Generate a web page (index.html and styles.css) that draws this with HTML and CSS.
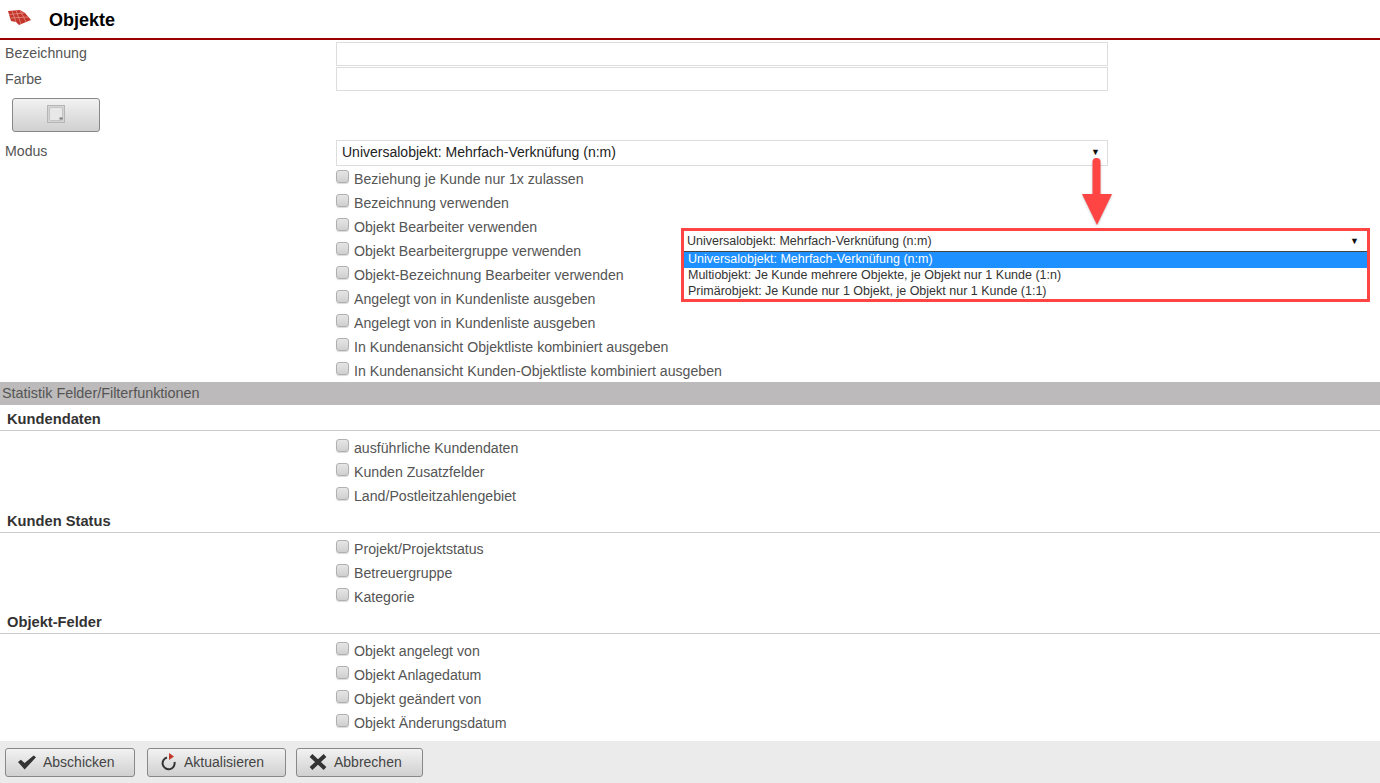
FILE: index.html
```html
<!DOCTYPE html>
<html lang="de">

<head>
    <meta charset="UTF-8" />
    <title>Objekte</title>
    <link rel="stylesheet" href="styles.css">
</head>

<body>

    <!-- Header -->
    <header class="header">
        <svg class="logo" width="24" height="16" viewBox="0 0 24 16">
            <path d="M0 1 L12 0 L17 3 L23 10 L11 15 L8 12 L3 11 Z" fill="#c4352b" />
            <path d="M4 .8 L8 12 M8 .4 L13 14 M12 0 L18 12 M1.500 4.500 L16 3 M3 8 L20 7" stroke="#e58f84" stroke-width=".8" fill="none" />
        </svg>
        <h1>Objekte</h1>
    </header>

    <!-- Main form -->
    <main class="form">
        <div class="row row-input">
            <label class="label">Bezeichnung</label>
            <div class="field"><input type="text" class="input"></div>
        </div>
        <div class="row row-input">
            <label class="label">Farbe</label>
            <div class="field"><input type="text" class="input"></div>
        </div>
        <button type="button" class="btn color-btn">
            <svg width="18" height="18" viewBox="0 0 18 18">
                <rect x=".5" y=".5" width="17" height="17" fill="#d4d4d4" stroke="#b5b5b5" />
                <rect x="2.500" y="2.500" width="13" height="13" rx="1.500" fill="#e8e8e8" stroke="#c4c4c4" />
                <rect x="12.500" y="12.500" width="3" height="2" fill="#777" />
            </svg>
        </button>
        <div class="row row-select">
            <label class="label">Modus</label>
            <div class="field">
                <div class="select">
                    <span>Universalobjekt: Mehrfach-Verknüfung (n:m)</span>
                    <span class="caret">▼</span>
                </div>
            </div>
        </div>

        <div class="checks">
            <label class="check"><input type="checkbox">Beziehung je Kunde nur 1x zulassen</label>
            <label class="check"><input type="checkbox">Bezeichnung verwenden</label>
            <label class="check"><input type="checkbox">Objekt Bearbeiter verwenden</label>
            <label class="check"><input type="checkbox">Objekt Bearbeitergruppe verwenden</label>
            <label class="check"><input type="checkbox">Objekt-Bezeichnung Bearbeiter verwenden</label>
            <label class="check"><input type="checkbox">Angelegt von in Kundenliste ausgeben</label>
            <label class="check"><input type="checkbox">Angelegt von in Kundenliste ausgeben</label>
            <label class="check"><input type="checkbox">In Kundenansicht Objektliste kombiniert ausgeben</label>
            <label class="check"><input type="checkbox">In Kundenansicht Kunden-Objektliste kombiniert ausgeben</label>
        </div>

        <div class="band">Statistik Felder/Filterfunktionen</div>

        <h2 class="group-title">Kundendaten</h2>
        <div class="checks group-checks">
            <label class="check"><input type="checkbox">ausführliche Kundendaten</label>
            <label class="check"><input type="checkbox">Kunden Zusatzfelder</label>
            <label class="check"><input type="checkbox">Land/Postleitzahlengebiet</label>
        </div>

        <h2 class="group-title">Kunden Status</h2>
        <div class="checks group-checks tight">
            <label class="check"><input type="checkbox">Projekt/Projektstatus</label>
            <label class="check"><input type="checkbox">Betreuergruppe</label>
            <label class="check"><input type="checkbox">Kategorie</label>
        </div>

        <h2 class="group-title">Objekt-Felder</h2>
        <div class="checks group-checks">
            <label class="check"><input type="checkbox">Objekt angelegt von</label>
            <label class="check"><input type="checkbox">Objekt Anlagedatum</label>
            <label class="check"><input type="checkbox">Objekt geändert von</label>
            <label class="check"><input type="checkbox">Objekt Änderungsdatum</label>
        </div>
    </main>

    <!-- Footer buttons -->
    <footer class="footer">
        <button type="button" class="btn action-btn btn-send">
            <svg width="19" height="15" viewBox="0 0 19 15">
                <path d="M0 7 L3 4.500 L7 8 L16.500 0 L19 2 L7 15 Z" fill="#333" />
            </svg>
            Abschicken
        </button>
        <button type="button" class="btn action-btn btn-refresh">
            <svg width="18" height="18" viewBox="0 0 18 18">
                <path d="M7 4.500 A6 6 0 1 0 14.500 9" fill="none" stroke="#333" stroke-width="2" />
                <path d="M9 0 L14 3.500 L9 7 Z" fill="#c0392b" />
            </svg>
            Aktualisieren
        </button>
        <button type="button" class="btn action-btn btn-cancel">
            <svg width="18" height="16" viewBox="0 0 18 16">
                <path d="M2 1.500 L16 14.500 M16 1.500 L2 14.500" stroke="#333" stroke-width="4" fill="none" />
            </svg>
            Abbrechen
        </button>
    </footer>

    <!-- Annotation over the form -->
    <svg class="arrow" width="34" height="72" viewBox="0 0 34 72">
        <path d="M16.500 6 V40" stroke="#ff4444" stroke-width="8" stroke-linecap="round" fill="none" />
        <path d="M2 38 H32 L17 69 Z" fill="#ff4444" />
    </svg>
    <div class="callout">
        <div class="callout-select">
            <span>Universalobjekt: Mehrfach-Verknüfung (n:m)</span>
            <span class="caret">▼</span>
        </div>
        <ul class="callout-list">
            <li class="selected">Universalobjekt: Mehrfach-Verknüfung (n:m)</li>
            <li>Multiobjekt: Je Kunde mehrere Objekte, je Objekt nur 1 Kunde (1:n)</li>
            <li>Primärobjekt: Je Kunde nur 1 Objekt, je Objekt nur 1 Kunde (1:1)</li>
        </ul>
    </div>

</body>

</html>
```

FILE: styles.css
```css
* {
    box-sizing: border-box;
}

html,
body {
    height: 100%;
}

body {
    margin: 0;
    height: 783px;
    display: flex;
    flex-direction: column;
    overflow: hidden;
    position: relative;
    font-family: 'Liberation Sans', Arial, sans-serif;
    font-size: 14.15px;
    color: #555;
    background: #fff;
}

/* Header */
.header {
    height: 40px;
    flex: none;
    display: flex;
    align-items: center;
    padding-left: 8px;
    border-bottom: 2px solid #9a0000;
}

.logo {
    margin-right: 17px;
    margin-top: -3px;
}

.header h1 {
    margin: 0;
    padding-top: 2px;
    font-size: 18px;
    color: #000;
}

/* Form */
.form {
    flex: 1;
    min-height: 0;
    overflow: hidden;
    padding-top: 2px;
}

.row {
    display: flex;
}

.row-input {
    height: 25px;
}

.row-input .label {
    line-height: 23px;
}

.row-input + .row-input .label {
    line-height: 25px;
}

.label {
    width: 336px;
    padding-left: 5px;
    flex: none;
}

.field {
    width: 772px;
}

.input {
    display: block;
    width: 100%;
    height: 24px;
    border: 1px solid #ddd;
    background: #fff;
}

.btn {
    font-family: inherit;
    font-size: 14px;
    color: #444;
    border: 1px solid #888;
    border-radius: 3px;
    background: linear-gradient(#f2f2f2, #d0d0d0);
    cursor: pointer;
}

.color-btn {
    display: flex;
    align-items: center;
    justify-content: center;
    width: 88px;
    height: 34px;
    margin: 6px 0 8px 12px;
    padding: 0 0 3px;
}

.row-select .label {
    line-height: 22px;
}

.select {
    display: flex;
    justify-content: space-between;
    align-items: center;
    height: 26px;
    padding: 0 7px 2px 5px;
    border: 1px solid #ddd;
    font-size: 14px;
    color: #222;
}

.caret {
    font-size: 9px;
    color: #111;
}

.checks {
    padding-left: 336px;
}

.check {
    display: flex;
    align-items: center;
    height: 24px;
    padding-top: 2px;
}

.check input {
    appearance: none;
    width: 13px;
    height: 13px;
    margin: -6px 5px 0 0;
    border: 1px solid #b0b0b0;
    border-radius: 3px;
    background: linear-gradient(#e6e6e6, #cfcfcf);
    box-shadow: 0 1px 1px rgba(0, 0, 0, 0.15);
    flex: none;
}

.band {
    height: 23px;
    padding-left: 2px;
    line-height: 23px;
    font-size: 14.4px;
    background: #bcbaba;
    color: #555;
}

.group-title {
    margin: 0;
    height: 26px;
    padding-left: 7px;
    line-height: 28px;
    font-size: 14.7px;
    color: #333;
    border-bottom: 1px solid #ccc;
}

.group-checks {
    padding-top: 4px;
}

.group-checks.tight {
    padding-top: 3px;
}

/* Footer */
.footer {
    height: 42px;
    flex: none;
    display: flex;
    align-items: center;
    padding: 0 5px;
    background: #ebebeb;
}

.action-btn {
    display: flex;
    align-items: center;
    gap: 7px;
    height: 29px;
    padding: 0 8px 0 12px;
}

.action-btn svg {
    flex: none;
    width: 18px;
}

.btn-send {
    width: 130px;
    margin-right: 12px;
}

.btn-refresh {
    width: 139px;
    margin-right: 10px;
    gap: 6px;
}

.btn-cancel {
    width: 127px;
}

/* Annotation */
.arrow {
    position: absolute;
    left: 1080px;
    top: 156px;
    filter: drop-shadow(0 1px 1px rgba(0, 0, 0, 0.25));
}

.callout {
    position: absolute;
    left: 681px;
    top: 228px;
    width: 689px;
    height: 74px;
    border: 3px solid #ff4444;
    background: #fff;
    font-size: 12.5px;
    color: #333;
}

.callout-select {
    display: flex;
    justify-content: space-between;
    align-items: center;
    height: 21px;
    padding: 0 8px 1px 3px;
    border-bottom: 1px solid #444;
}

.callout-list {
    list-style: none;
    margin: 0;
    padding: 0;
}

.callout-list li {
    height: 16px;
    line-height: 15px;
    padding-left: 4px;
}

.callout-list .selected {
    background: #1e90ff;
    color: #fff;
}
```
